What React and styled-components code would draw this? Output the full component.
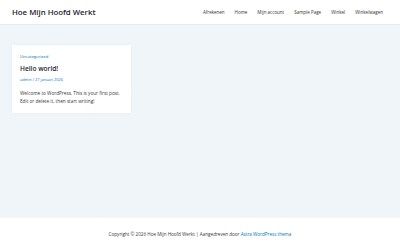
import React from 'react'
import styled, { createGlobalStyle } from 'styled-components'

const GlobalStyle = createGlobalStyle`
  html, body {
    margin: 0;
    padding: 0;
    background: #ffffff;
  }
  body {
    font-family: "Open Sans", "Noto Sans", sans-serif;
    color: #3a3a3a;
  }
  * {
    box-sizing: border-box;
  }
`

const Page = styled.div`
  display: flex;
  flex-direction: column;
  width: 400px;
  height: 250px;
`

const Header = styled.header`
  display: flex;
  justify-content: space-between;
  align-items: center;
  height: 25px;
  padding: 0 12px;
  background: #ffffff;
  border-bottom: 1px solid #e6ebf1;
`

const SiteTitle = styled.div`
  font-size: 7.8px;
  font-weight: 600;
  color: #1e2530;
`

const Nav = styled.nav`
  display: flex;
  gap: 10px;
  padding-right: 5px;
`

const NavItem = styled.a`
  font-size: 4.5px;
  color: #333;
  text-decoration: none;
`

const Main = styled.main`
  flex: 1;
  background: #f0f5fa;
  padding: 20px 12px;
`

const Card = styled.article`
  width: 119px;
  background: #ffffff;
  padding: 9px 8px 8px;
  box-shadow: 0 0 4px rgba(0, 0, 0, 0.04);
`

const Category = styled.a`
  display: block;
  font-size: 4.2px;
  line-height: 6px;
  color: #0274be;
  text-decoration: none;
`

const Title = styled.h2`
  margin: 4px 0 0;
  font-size: 6.6px;
  line-height: 10px;
  font-weight: 600;
  color: #1e2530;
`

const Meta = styled.div`
  margin-top: 3px;
  font-size: 3.9px;
  line-height: 6px;
  color: #0274be;
`

const Excerpt = styled.p`
  margin: 6px 0 0;
  font-size: 4.7px;
  line-height: 8px;
  color: #3a3a3a;
`

const Footer = styled.footer`
  display: flex;
  justify-content: center;
  align-items: center;
  height: 32px;
  background: #ffffff;
  font-size: 4.6px;
  color: #3a3a3a;
`

const FooterLink = styled.a`
  color: #0274be;
  text-decoration: none;
`

const navItems = ['Afrekenen', 'Home', 'Mijn account', 'Sample Page', 'Winkel', 'Winkelwagen']

export default function App() {
  return (
    <>
      <GlobalStyle />
      <Page>
        <Header>
          <SiteTitle>Hoe Mijn Hoofd Werkt</SiteTitle>
          <Nav>
            {navItems.map((item) => (
              <NavItem key={item}>{item}</NavItem>
            ))}
          </Nav>
        </Header>
        <Main>
          <Card>
            <Category>Uncategorized</Category>
            <Title>Hello world!</Title>
            <Meta>admin / 27 januari 2026</Meta>
            <Excerpt>
              Welcome to WordPress. This is your first post. Edit or delete it, then start writing!
            </Excerpt>
          </Card>
        </Main>
        <Footer>
          Copyright © 2026 Hoe Mijn Hoofd Werkt | Aangedreven door&nbsp;
          <FooterLink>Astra WordPress thema</FooterLink>
        </Footer>
      </Page>
    </>
  )
}
